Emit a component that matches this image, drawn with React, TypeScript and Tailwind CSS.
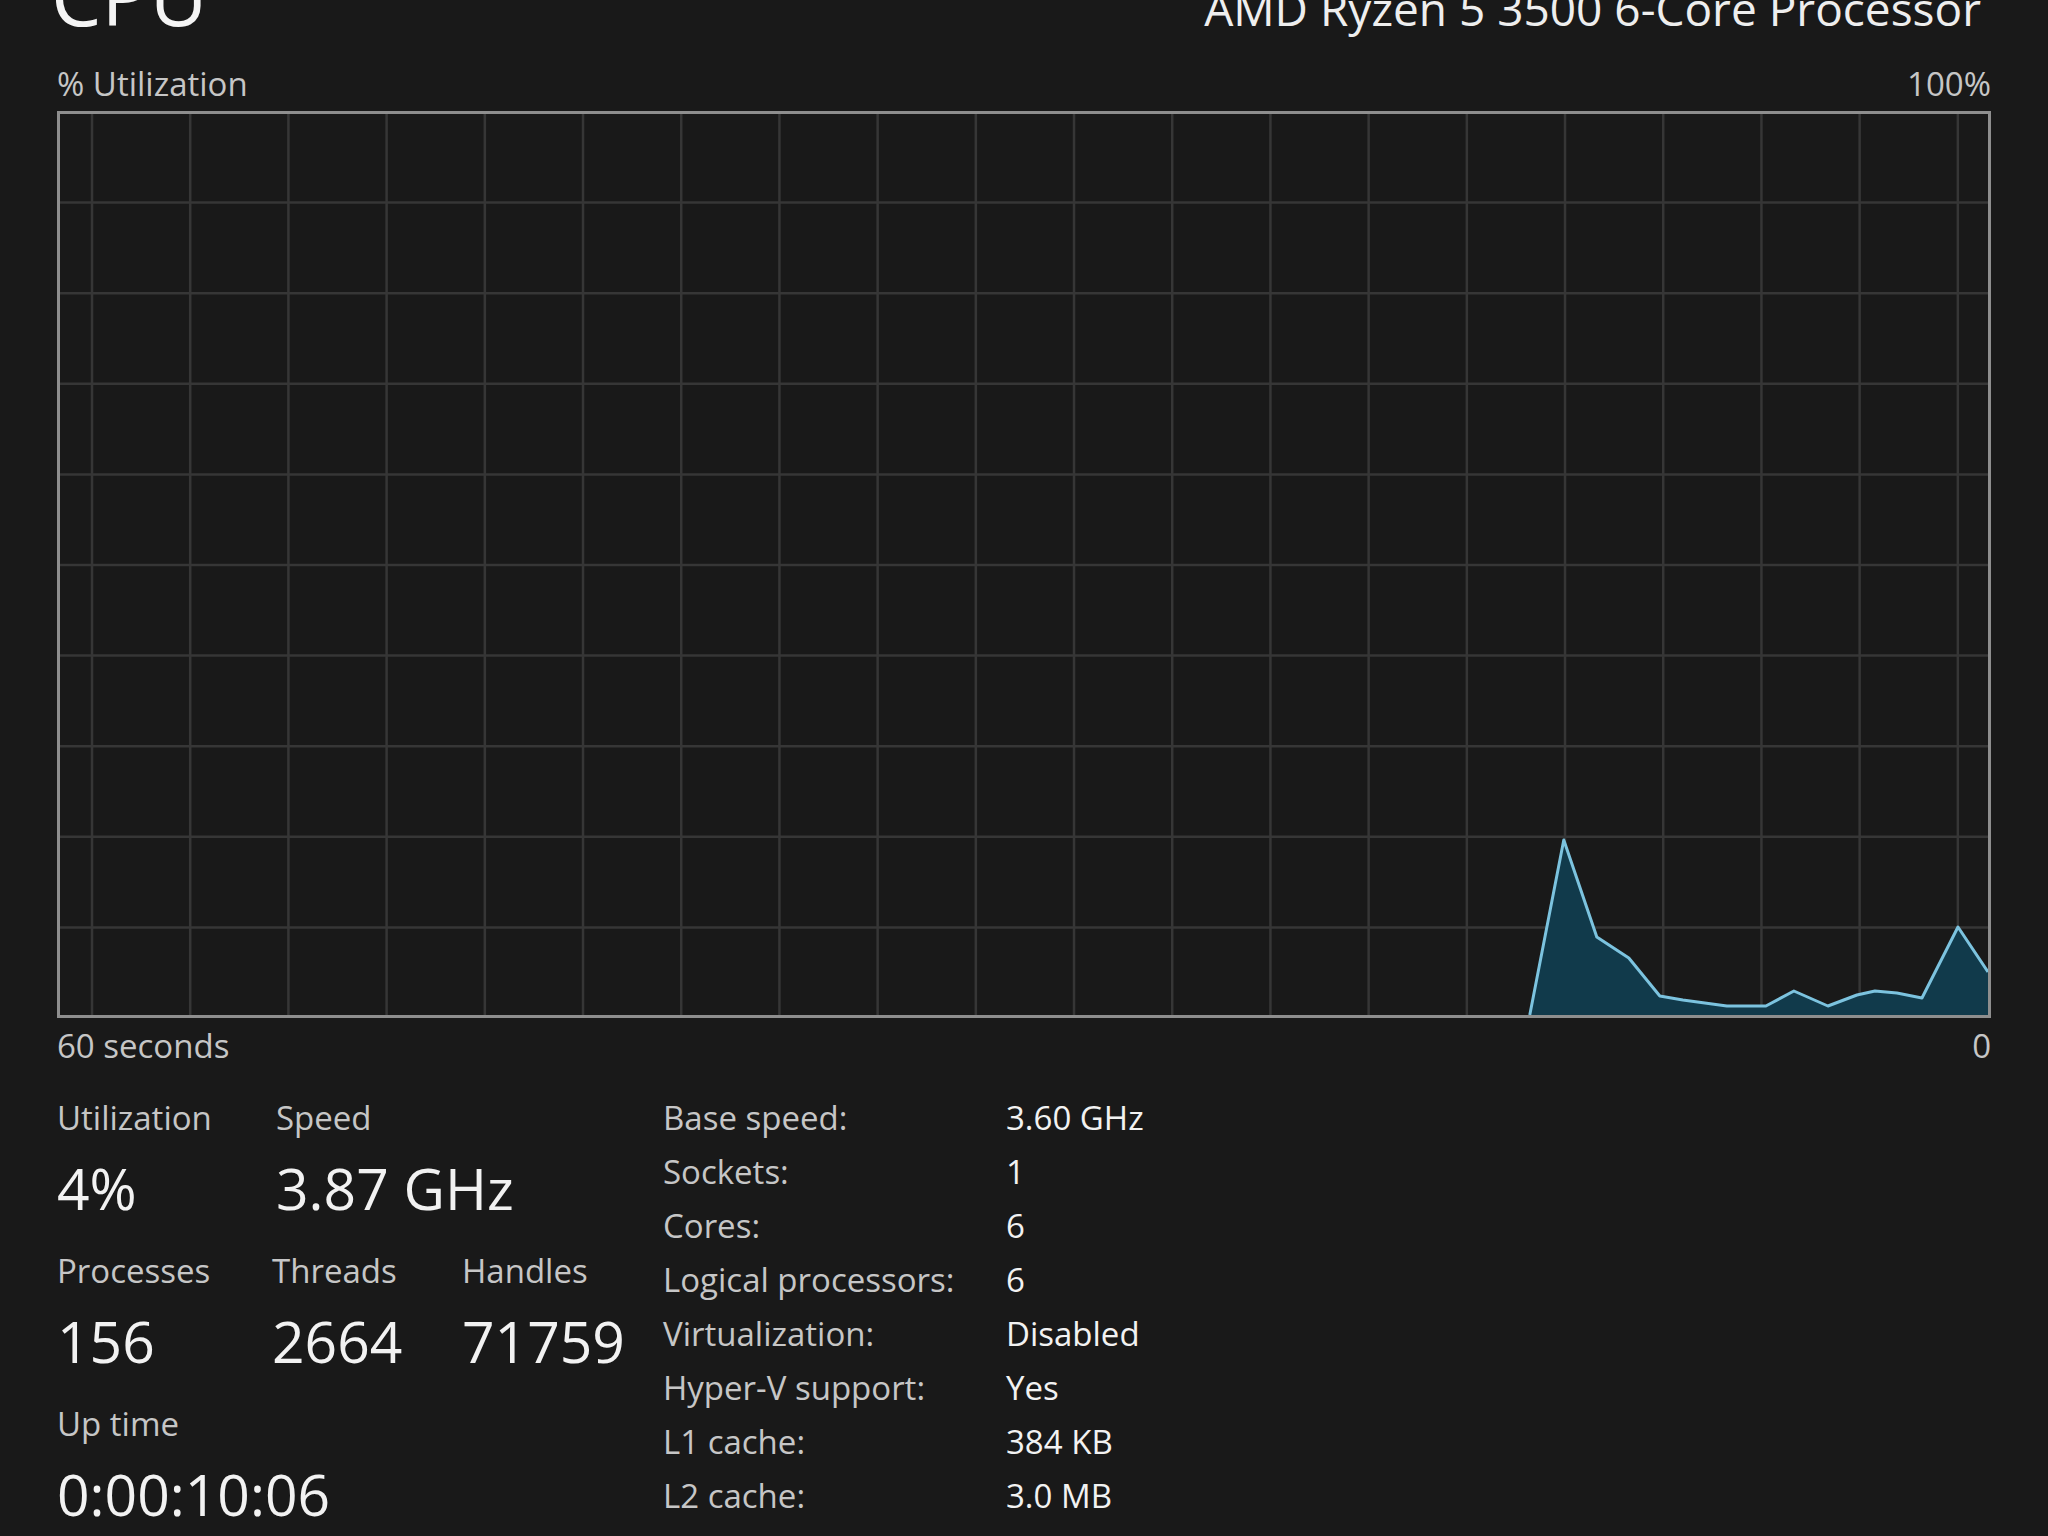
import React from "react";

const FONT = { fontFamily: '"Open Sans", "Noto Sans", "Liberation Sans", sans-serif' };

// Chart plot area in SVG units (inside the 3px frame)
const W = 1927;
const H = 901;

const vLines = Array.from({ length: 20 }, (_, k) => 32 + 98.15 * k);
const hLines = Array.from({ length: 9 }, (_, k) => -2 + 90.6 * (k + 1));

const samples: [number, number][] = [
  [1469, 901],
  [1503, 726],
  [1536, 823],
  [1568, 844],
  [1599, 882],
  [1622, 886],
  [1666, 892],
  [1705, 892],
  [1733, 877],
  [1767, 892],
  [1796, 881],
  [1814, 877],
  [1836, 879],
  [1861, 884],
  [1897, 813],
  [1927, 858],
];

function UsageChart() {
  const line = samples.map(([x, y]) => `${x},${y}`).join(" ");
  const area = `${line} ${W},${H}`;
  return (
    <div className="h-[907px] w-full border-[3px] border-[#8e8e8e]">
      <svg className="block h-full w-full" viewBox={`0 0 ${W} ${H}`} preserveAspectRatio="none">
        {vLines.map((x) => (
          <line key={`v${x}`} x1={x} y1={0} x2={x} y2={H} stroke="#363636" strokeWidth={2.5} />
        ))}
        {hLines.map((y) => (
          <line key={`h${y}`} x1={0} y1={y} x2={W} y2={y} stroke="#363636" strokeWidth={2.5} />
        ))}
        <polygon points={area} fill="#113a4b" />
        <polyline points={line} fill="none" stroke="#7cc3df" strokeWidth={3} strokeLinejoin="round" />
      </svg>
    </div>
  );
}

function Stat({ label, value, width }: { label: string; value: string; width: string }) {
  return (
    <div className={width}>
      <div className="text-[33px] leading-[54px] text-[#c6c6c6]">{label}</div>
      <div className="text-[57px] leading-[86px] text-[#f2f2f2]">{value}</div>
    </div>
  );
}

const specs: [string, string][] = [
  ["Base speed:", "3.60 GHz"],
  ["Sockets:", "1"],
  ["Cores:", "6"],
  ["Logical processors:", "6"],
  ["Virtualization:", "Disabled"],
  ["Hyper-V support:", "Yes"],
  ["L1 cache:", "384 KB"],
  ["L2 cache:", "3.0 MB"],
  ["L3 cache:", "16.0 MB"],
];

export default function App() {
  return (
    <div className="h-[1536px] w-[2048px] overflow-hidden bg-[#191919] px-[57px]" style={FONT}>
      <div className="-mt-[45px] flex items-baseline justify-between">
        <div className="-ml-[6px] text-[80px] leading-none text-[#f4f4f4]">CPU</div>
        <div className="pr-[10px] text-[46px] leading-none text-[#eeeeee]">AMD Ryzen 5 3500 6-Core Processor</div>
      </div>

      <div className="mt-[29px] flex justify-between text-[33px] leading-[40px] text-[#c6c6c6]">
        <span>% Utilization</span>
        <span>100%</span>
      </div>

      <div className="mt-[7px]">
        <UsageChart />
      </div>

      <div className="mt-[8px] flex justify-between text-[33px] leading-[40px] text-[#c6c6c6]">
        <span>60 seconds</span>
        <span>0</span>
      </div>

      <div className="mt-[25px] flex">
        <div className="w-[606px]">
          <div className="mb-[13px] flex">
            <Stat label="Utilization" value="4%" width="w-[219px]" />
            <Stat label="Speed" value="3.87 GHz" width="w-[300px]" />
          </div>
          <div className="mb-[13px] flex">
            <Stat label="Processes" value="156" width="w-[215px]" />
            <Stat label="Threads" value="2664" width="w-[190px]" />
            <Stat label="Handles" value="71759" width="w-[190px]" />
          </div>
          <div className="flex">
            <Stat label="Up time" value="0:00:10:06" width="w-[400px]" />
          </div>
        </div>

        <div className="grid grid-cols-[343px_auto] text-[33px] leading-[54px]">
          {specs.map(([k, v]) => (
            <React.Fragment key={k}>
              <div className="text-[#c6c6c6]">{k}</div>
              <div className="text-[#f2f2f2]">{v}</div>
            </React.Fragment>
          ))}
        </div>
      </div>
    </div>
  );
}
